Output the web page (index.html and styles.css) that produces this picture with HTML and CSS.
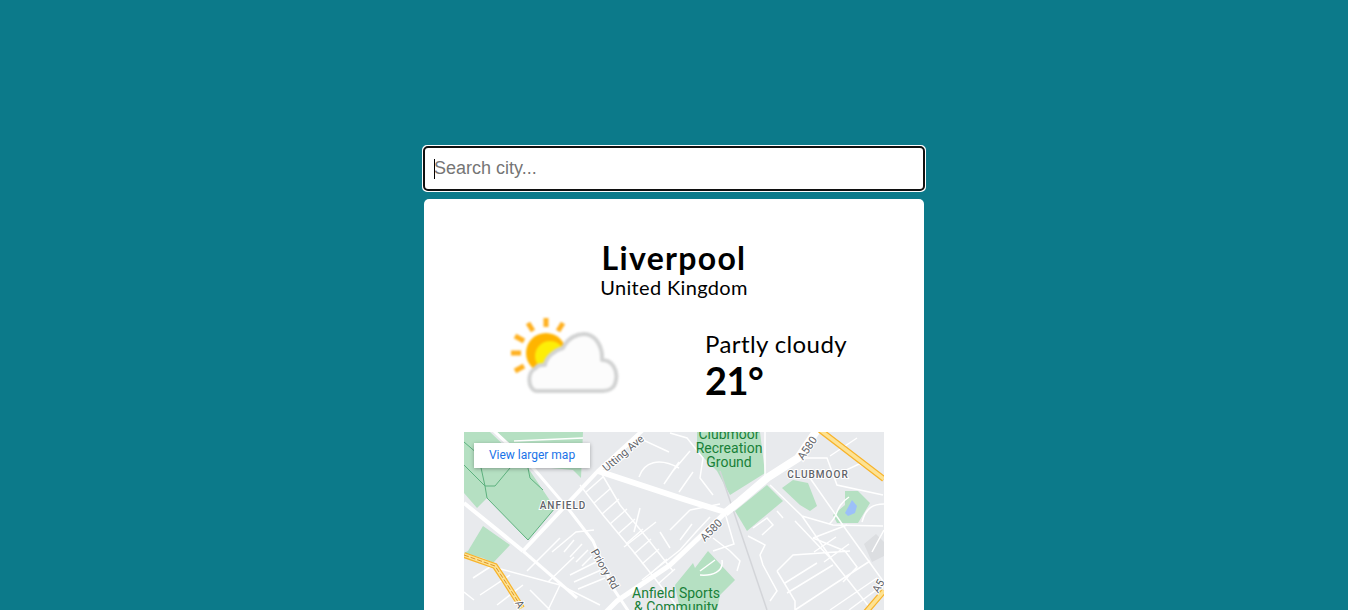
FILE: index.html
```html
<!DOCTYPE html>
<html lang="en">
<head>
<meta charset="utf-8">
<title>Weather</title>
<link rel="stylesheet" href="styles.css">
</head>
<body>
<main class="app">
  <div class="search-box">
    <input class="search" type="text" placeholder="Search city..." autofocus>
    <span class="caret"></span>
  </div>
  <section class="card">
    <header class="place">
      <h1 class="city">Liverpool</h1>
      <p class="country">United Kingdom</p>
    </header>
    <div class="weather">
      <div class="icon-cell">
        <svg class="weather-icon" viewBox="0 0 130 90" width="130" height="90" aria-hidden="true">
          <path class="rays" d="M46 8v9M28 13l5 8M63 13l-5 8M15 26l9 5M11 43h10M15 61l9-5"/>
          <circle class="sun" cx="46" cy="43" r="20"/>
          <circle class="sun-core" cx="50" cy="46" r="15"/>
          <path class="cloud" d="M37 81C28 81 26 62 36 58C38 54 42 55 45 55C46 47 55 40 63 38C68 27 78 24 84 24C95 24 103 36 102 50C112 50 118 60 116 70C115 78 109 81 103 81Z"/>
        </svg>
      </div>
      <div class="conditions">
        <p class="summary">Partly cloudy</p>
        <p class="temp">21°</p>
      </div>
    </div>
    <div class="map">
      <svg class="map-art" viewBox="0 0 420 450" width="420" height="450" aria-hidden="true">
        <rect class="land" width="420" height="450"/>
        <g class="park">
          <path d="M0 0H26L64 36L91 76L64 108L23 66L13 76L0 61Z"/>
          <path d="M33 0H119L117 46L109 38L76 35L43 9Z"/>
          <path d="M4 119L19 94L46 113L29 131L19 126L0 121Z"/>
          <path d="M233 0H296L301 41L266 63L253 39L233 19Z"/>
          <path d="M271 79L303 53L319 69L283 99Z"/>
          <path d="M318 56L329 48L344 51L353 74L346 79L336 73Z"/>
          <path d="M369 83L381 73L381 59L394 59L406 71L394 91L373 91Z"/>
          <path d="M211 153L229 131L231 136L244 119L271 148L256 163L253 178L216 178Z"/>
        </g>
        <path class="grey" d="M400 112L412 102L420 110V124L408 130Z"/>
        <path class="lake" d="M381 81L388 68L393 74L391 81L384 84Z"/>
        <path class="parklines" d="M0 33L21 54H31M21 54L23 66L64 108L91 76M31 54L46 36M64 36L66 46L79 58M0 10L14 22L21 54"/>
        <path class="rail" d="M256 39L303 178"/>
        <g class="minor">
          <path d="M50 9L119 6M70 20C90 14 105 16 119 12"/>
          <path d="M116 53L139 83L169 119L196 153L216 178M136 39L156 73L183 106L209 139"/>
          <path d="M122 60L139 45M130 71L147 56M138 82L155 67M146 92L163 77M154 102L171 87M162 112L179 97M170 122L187 107M178 132L195 117M186 142L203 127M194 152L211 137"/>
          <path d="M106 143L132 130M110 150L137 138M114 157L141 146M100 120L110 108M106 125L118 112M112 130L124 118M118 134L128 124M88 120L112 100L130 98"/>
          <path d="M33 136L96 153L136 173M9 146L29 133M16 163L46 143M33 173L59 153M63 139L83 119M76 126L96 106M84 150L110 125M10 168L0 160M66 158L86 178M96 153L84 178"/>
          <path d="M206 1L223 6L239 26L236 46L249 63M209 39L226 19M145 28L175 6L205 20M175 45C180 30 195 25 215 36M200 52L215 30M215 60L229 40M226 78L256 72M246 85L232 100L216 118M206 98L226 78M216 108L228 92"/>
          <path d="M178 148L216 118M160 115L192 90M176 76L170 100M196 100L206 116"/>
          <path d="M301 0V43M306 53L338 84L369 129L406 176M338 84L369 93L419 94M346 46L383 99L419 149M339 26L363 26L373 53L419 63M366 24L393 6M331 89L369 129"/>
          <path d="M313 139L329 123L386 119M313 139L331 169V178M323 161L369 133M321 151L353 131M349 106L381 119M349 106L383 93M331 178L369 153L406 129M366 178L413 146M381 119L393 135L379 150M350 120L372 105M360 130L385 112"/>
          <path d="M284 104L301 113L296 123L299 133L306 146L313 159L306 169M289 96L303 86L309 93L298 103M313 79L319 86M249 106L266 119L276 129L273 139M236 139L251 128M236 143C248 144 260 140 258 128M261 81L270 112L249 119"/>
          <path d="M378 40L395 32L420 44M365 92C375 85 370 75 385 65M398 90C402 75 410 72 420 72M420 98L408 120M385 178L420 152"/>
        </g>
        <g class="major">
          <path d="M0 71L59 119"/>
          <path d="M59 119L134 39L179 -2"/>
        </g>
        <g class="medium">
          <path d="M29 -2L71 38L106 79L129 109L149 156L165 180"/>
          <path d="M59 119L113 166"/>
        </g>
        <path class="road-wide" d="M134 39L216 66L261 80"/>
        <path class="road-wider" d="M261 81L276 69L303 46L334 26L353 -2"/>
        <path class="road-edge" d="M140 182L153 169L206 133L261 81"/>
        <path class="mw-out" d="M0 123L31 134L39 146L58 176M356 -2L420 47M402 180L420 159"/>
        <path class="mw-in" d="M0 123L31 134L39 146L58 176M356 -2L420 47M402 180L420 159"/>
        <path class="mw-dash" d="M0 123L31 134L39 146L58 176"/>
        <g class="labels">
          <text class="poi" text-anchor="middle"><tspan x="265" y="7">Clubmoor</tspan><tspan x="265" y="21">Recreation</tspan><tspan x="265" y="35">Ground</tspan></text>
          <text class="poi" text-anchor="middle"><tspan x="212" y="166">Anfield Sports</tspan><tspan x="212" y="180">&amp; Community</tspan></text>
          <text class="area" x="99" y="76.500" text-anchor="middle">ANFIELD</text>
          <text class="area" x="354" y="45.500" text-anchor="middle">CLUBMOOR</text>
          <text class="street" y="4" text-anchor="middle" transform="translate(159 21) rotate(-40)">Utting Ave</text>
          <text class="street" y="4" text-anchor="middle" transform="translate(141 137) rotate(60)">Priory Rd</text>
          <text class="street" y="4" text-anchor="middle" transform="translate(247 98) rotate(-45)">A580</text>
          <text class="street" y="4" text-anchor="middle" transform="translate(343 16) rotate(-55)">A580</text>
          <text class="street" y="4" text-anchor="middle" transform="translate(56 172) rotate(62)">A</text>
          <text class="street" y="4" text-anchor="middle" transform="translate(414 154) rotate(-60)">A5</text>
        </g>
      </svg>
      <a class="larger" href="#">View larger map</a>
    </div>
  </section>
</main>
</body>
</html>
```
FILE: styles.css
```css
* { box-sizing: border-box; }
html, body { margin: 0; }
body {
  background: #0c7a8a;
  font-family: "Lato", "Noto Sans", sans-serif;
  color: #000;
}
.app {
  display: flex;
  flex-direction: column;
  align-items: center;
  gap: 9px;
  padding: 147px 0 40px;
}
.search-box { position: relative; width: 500px; height: 43px; }
.search {
  display: block;
  width: 100%;
  height: 100%;
  padding: 0 10px;
  border: none;
  border-radius: 4px;
  background: #fff;
  font: 18px "Liberation Sans", Arial, sans-serif;
}
.caret {
  position: absolute;
  left: 10px;
  top: 12px;
  width: 1px;
  height: 20px;
  background: #000;
}
.card {
  width: 500px;
  padding: 40px;
  background: #fff;
  border-radius: 5px;
}
.place { text-align: center; }
.city { margin: 0; font-size: 32px; line-height: 37px; font-weight: 700; letter-spacing: 1.300px; }
.country { margin: 0; font-size: 20px; line-height: 23px; letter-spacing: .350px; }
.weather {
  display: grid;
  grid-template-columns: 210px 210px;
  height: 133px;
}
.icon-cell { padding: 11px 0 0 36px; }
.weather-icon { display: block; filter: blur(1px); }
.rays { fill: none; stroke: #ffb01f; stroke-width: 5; }
.sun { fill: #ffb400; }
.sun-core { fill: #fdee07; }
.cloud { fill: #fcfcfc; stroke: #d2d3d3; stroke-width: 4; stroke-linejoin: round; }
.conditions { padding: 30px 0 0 31px; }
.summary { margin: 0; font-size: 24px; line-height: 30px; letter-spacing: .400px; }
.temp { margin: 0; font-size: 38px; line-height: 42px; font-weight: 700; letter-spacing: -.500px; }
.map { position: relative; width: 420px; height: 450px; }
.map-art { display: block; }
.land { fill: #e8eaed; }
.park path { fill: #b5e0c2; }
.grey { fill: #dcdee1; }
.lake { fill: #9cc0f9; }
.parklines { fill: none; stroke: #5db17e; stroke-width: 1; }
.rail { fill: none; stroke: #d3d5d9; stroke-width: 1.500; }
.minor path { fill: none; stroke: #fff; stroke-width: 1.500; }
.major path { fill: none; stroke: #fff; stroke-width: 4; }
.medium path { fill: none; stroke: #fff; stroke-width: 3; }
.road-wide { fill: none; stroke: #fff; stroke-width: 6; }
.road-edge { fill: none; stroke: #fff; stroke-width: 5; }
.road-wider { fill: none; stroke: #fff; stroke-width: 8; }
.mw-out { fill: none; stroke: #f7b32b; stroke-width: 6; }
.mw-in { fill: none; stroke: #fde293; stroke-width: 3.500; }
.mw-dash { fill: none; stroke: #d9932b; stroke-width: 1; stroke-dasharray: 5 2; }
.labels text { font-family: Roboto, sans-serif; }
.labels .poi { font-size: 14px; fill: #188038; }
.labels .area { font-size: 10px; font-weight: 500; letter-spacing: 1px; fill: #5f6368; stroke: #fff; stroke-width: 2px; paint-order: stroke; }
.labels .street { font-size: 11px; fill: #5f6368; stroke: #fff; stroke-width: 2px; paint-order: stroke; }
.larger {
  position: absolute;
  top: 11px;
  left: 10px;
  width: 116px;
  height: 25px;
  padding-bottom: 2px;
  display: flex;
  align-items: center;
  justify-content: center;
  background: #fff;
  box-shadow: 0 1px 4px rgba(0,0,0,.3);
  color: #1a73e8;
  font: 12px Roboto, sans-serif;
  text-decoration: none;
}
```
